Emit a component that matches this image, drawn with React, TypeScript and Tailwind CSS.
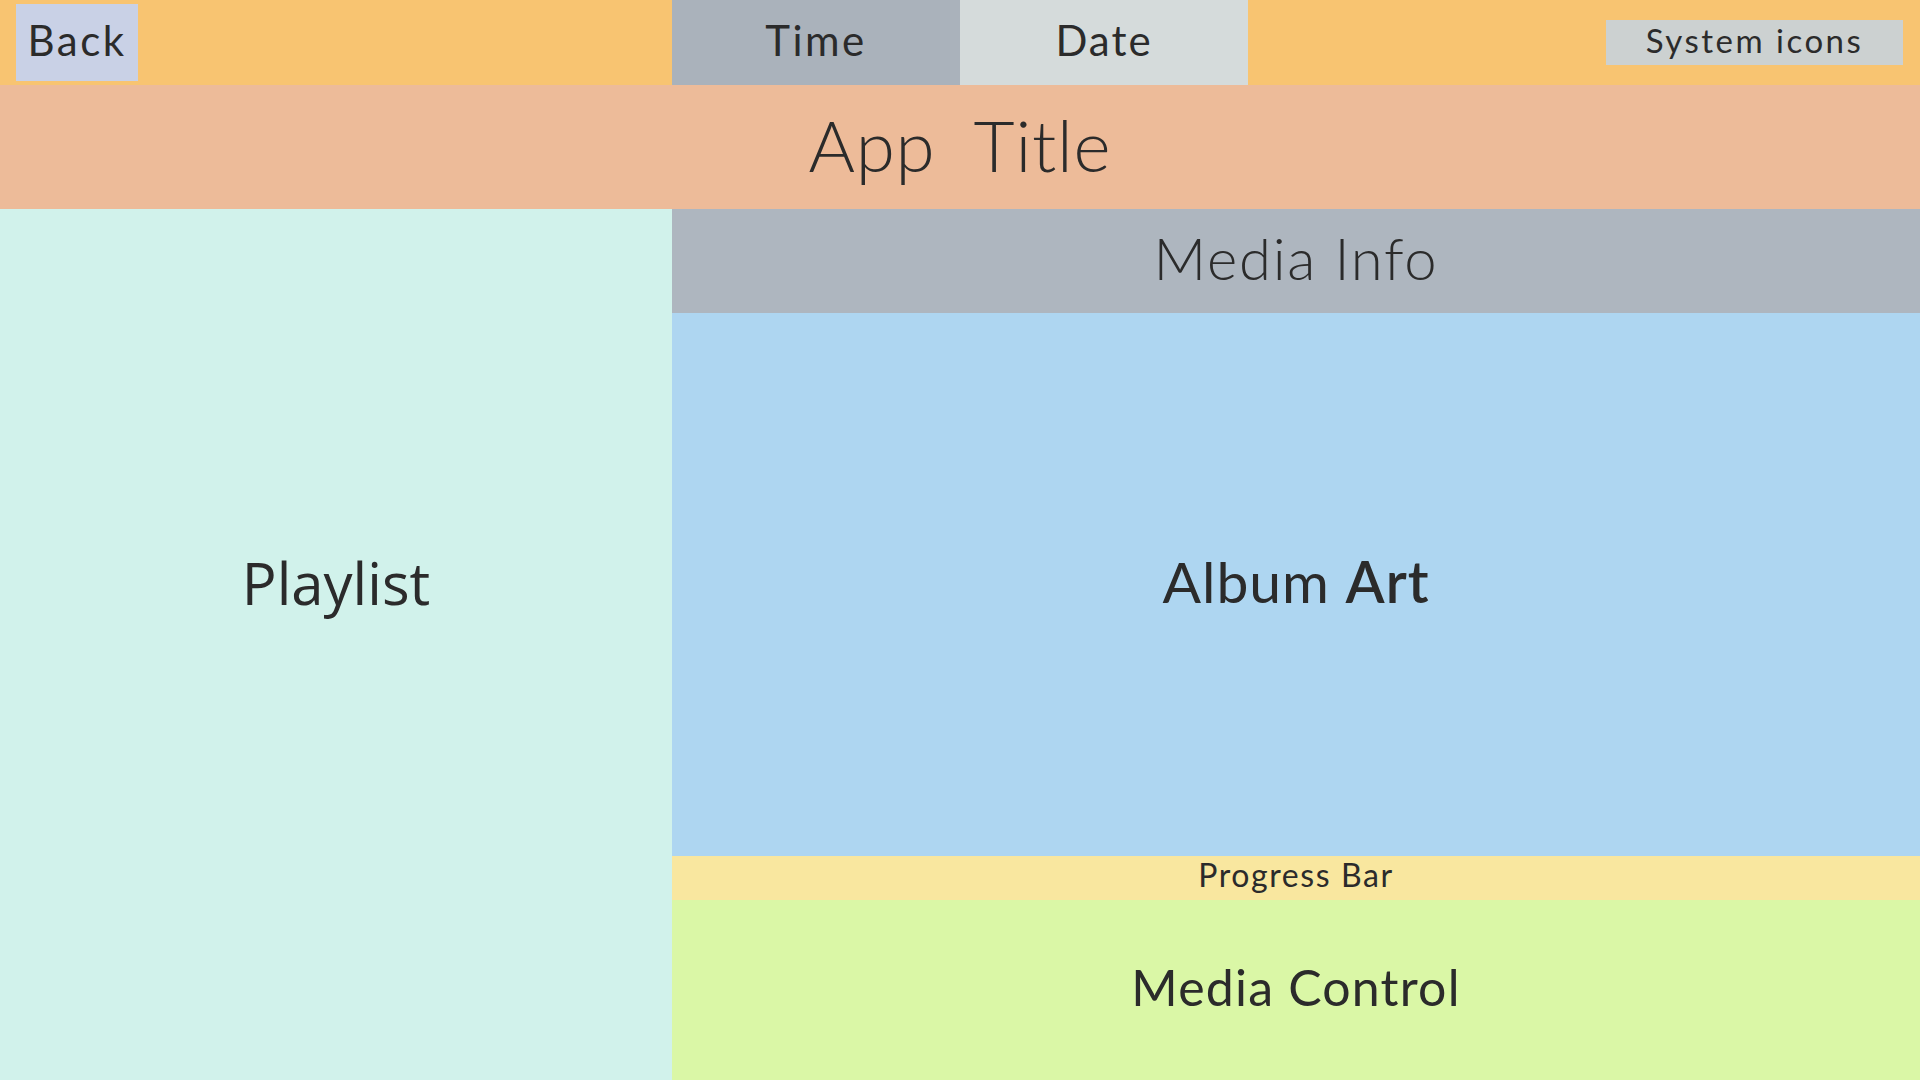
import React from 'react';

const App: React.FC = () => {
  return (
    <div className="w-[1920px] h-[1080px] flex flex-col text-[#2b2b2b] font-['Lato',_'Open_Sans',_sans-serif]">
      {/* Barre du haut */}
      <div className="h-[85px] flex bg-[#F8C471]">
        <div className="w-[672px] flex items-center pl-[16px]">
          <div className="w-[122px] h-[77px] bg-[#C9D1E6] flex items-center justify-center pb-[6px] text-[42px] tracking-[2.5px] leading-none">
            Back
          </div>
        </div>
        <div className="w-[288px] bg-[#AAB2BB] flex items-center justify-center pb-[6px] text-[42px] tracking-[2.5px] leading-none">
          Time
        </div>
        <div className="w-[288px] bg-[#D5DBDB] flex items-center justify-center pb-[6px] text-[42px] tracking-[2px] leading-none">
          Date
        </div>
        <div className="flex-1 flex items-center justify-end pr-[17px]">
          <div className="w-[297px] h-[45px] bg-[#CCD1D1] flex items-center justify-center pb-[4px] text-[33px] tracking-[2.5px] leading-none">
            System icons
          </div>
        </div>
      </div>

      {/* Titre */}
      <div className="h-[124px] bg-[#EDBB99] flex items-center justify-center pb-[6px] text-[71px] tracking-[0.8px] font-light leading-none whitespace-pre">
        App  Title
      </div>

      {/* Contenu */}
      <div className="flex-1 flex">
        <div className="w-[672px] bg-[#D1F2EB] flex justify-center pt-[345px] text-[58px] leading-none font-['Open_Sans',_sans-serif]">
          Playlist
        </div>
        <div className="flex-1 flex flex-col">
          <div className="h-[104px] bg-[#AEB6BF] flex items-center justify-center pb-[6px] text-[58px] tracking-[1.7px] font-light leading-none">
            Media Info
          </div>
          <div className="h-[543px] bg-[#AED6F1] flex items-center justify-center pb-[6px] text-[57px] tracking-[1px] leading-none">
            <span>Album <span className="font-semibold">Art</span></span>
          </div>
          <div className="h-[44px] bg-[#F9E79F] flex items-center justify-center pb-[6px] text-[32px] tracking-[1.6px] leading-none">
            Progress Bar
          </div>
          <div className="flex-1 bg-[#DAF7A6] flex items-center justify-center pb-[6px] text-[50px] tracking-[1.2px] leading-none">
            Media Control
          </div>
        </div>
      </div>
    </div>
  );
};

export default App;
